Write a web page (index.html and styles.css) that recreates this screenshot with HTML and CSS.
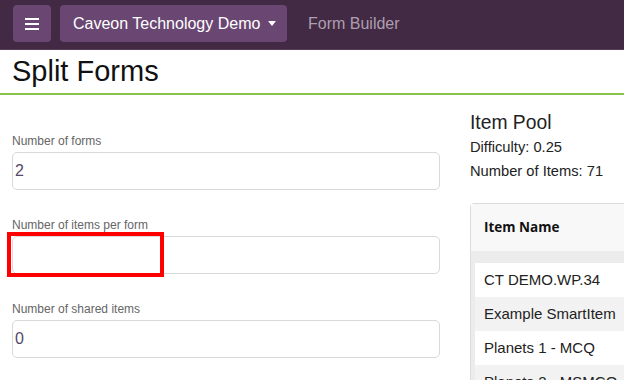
FILE: index.html
```html
<!DOCTYPE html>
<html lang="en">
<head>
<meta charset="utf-8">
<title>Split Forms</title>
<link rel="stylesheet" href="styles.css">
</head>
<body>
<nav class="navbar">
  <button class="nav-btn menu-btn" aria-label="Menu">
    <svg width="14" height="12" viewBox="0 0 14 12"><rect x="0" y="0" width="14" height="2" fill="#fff"/><rect x="0" y="5" width="14" height="2" fill="#fff"/><rect x="0" y="10" width="14" height="2" fill="#fff"/></svg>
  </button>
  <button class="nav-btn org-btn">Caveon Technology Demo <span class="caret"></span></button>
  <span class="nav-link">Form Builder</span>
</nav>
<header class="page-head">
  <h1>Split Forms</h1>
</header>
<main class="content">
  <section class="form-col">
    <div class="field">
      <label>Number of forms</label>
      <div class="input">2</div>
    </div>
    <div class="field highlight-wrap">
      <label>Number of items per form</label>
      <div class="input"></div>
      <div class="highlight"></div>
    </div>
    <div class="field">
      <label>Number of shared items</label>
      <div class="input">0</div>
    </div>
  </section>
  <section class="pool-col">
    <h2>Item Pool</h2>
    <p>Difficulty: 0.25</p>
    <p>Number of Items: 71</p>
    <div class="card">
      <div class="card-head">Item Name</div>
      <div class="card-body">
        <div class="row">CT DEMO.WP.34</div>
        <div class="row alt">Example SmartItem</div>
        <div class="row">Planets 1 - MCQ</div>
        <div class="row alt">Planets 2 - MSMCQ</div>
      </div>
    </div>
  </section>
</main>
</body>
</html>
```
FILE: styles.css
```css
html, body {
  margin: 0;
  padding: 0;
  overflow: hidden;
  background: #fff;
  font-family: "Liberation Sans", Arial, sans-serif;
}
.navbar {
  height: 44px;
  background: #432a44;
  border-bottom: 1px solid #5a3f5c;
  display: flex;
  align-items: flex-start;
  padding: 5px 0 0 13px;
  gap: 9px;
}
.nav-btn {
  height: 37px;
  border: none;
  border-radius: 4px;
  background: #6a4672;
  color: #fff;
  font-family: "Liberation Sans", Arial, sans-serif;
  font-size: 16px;
  display: flex;
  align-items: center;
  cursor: pointer;
}
.menu-btn {
  width: 38px;
  justify-content: center;
  padding: 0;
}
.org-btn {
  width: 227px;
  padding: 0 0 0 13px;
}
.caret {
  display: inline-block;
  margin-left: 8px;
  width: 0;
  height: 0;
  border-left: 4.5px solid transparent;
  border-right: 4.5px solid transparent;
  border-top: 5px solid #fff;
}
.nav-link {
  color: #ad9fb0;
  font-size: 16px;
  line-height: 37px;
  margin-left: 12px;
}
.page-head {
  height: 43px;
  border-bottom: 2px solid #8bc34a;
  padding-left: 12px;
}
h1 {
  margin: 0;
  font-weight: normal;
  font-size: 29px;
  line-height: 43px;
  color: #111;
}
.content {
  display: grid;
  grid-template-columns: 428px 340px;
  column-gap: 30px;
  padding-left: 12px;
}
.form-col {
  padding-top: 39px;
}
.field {
  margin-bottom: 28px;
}
.field label {
  display: block;
  font-size: 12px;
  line-height: 14px;
  color: #666;
  margin-bottom: 4px;
}
.input {
  height: 36px;
  border: 1px solid #d9d9d9;
  border-radius: 5px;
  padding-left: 2px;
  font-size: 16px;
  line-height: 36px;
  color: #55496a;
}
.highlight-wrap {
  position: relative;
}
.highlight {
  position: absolute;
  left: -5px;
  top: 14px;
  width: 149px;
  height: 37px;
  border: 4px solid #f00;
}
.pool-col {
  padding-top: 16px;
}
h2 {
  margin: 0;
  font-weight: normal;
  font-size: 19.3px;
  line-height: 24px;
  color: #222;
}
.pool-col p {
  margin: 0;
  font-size: 14.7px;
  line-height: 24px;
  color: #222;
}
.card {
  margin-top: 20px;
  border: 1px solid #dcdcdc;
  border-radius: 4px 0 0 0;
  background: #ececec;
}
.card-head {
  height: 47px;
  background: #f8f8f8;
  font-family: "Open Sans", "Liberation Sans", sans-serif;
  font-weight: bold;
  font-size: 13.5px;
  line-height: 47px;
  padding-left: 13px;
  color: #111;
}
.card-body {
  padding: 12px 0 0 4px;
}
.row {
  height: 34px;
  line-height: 34px;
  background: #fff;
  font-size: 15px;
  color: #222;
  padding-left: 9px;
}
.row.alt {
  background: #f2f2f2;
}
```
